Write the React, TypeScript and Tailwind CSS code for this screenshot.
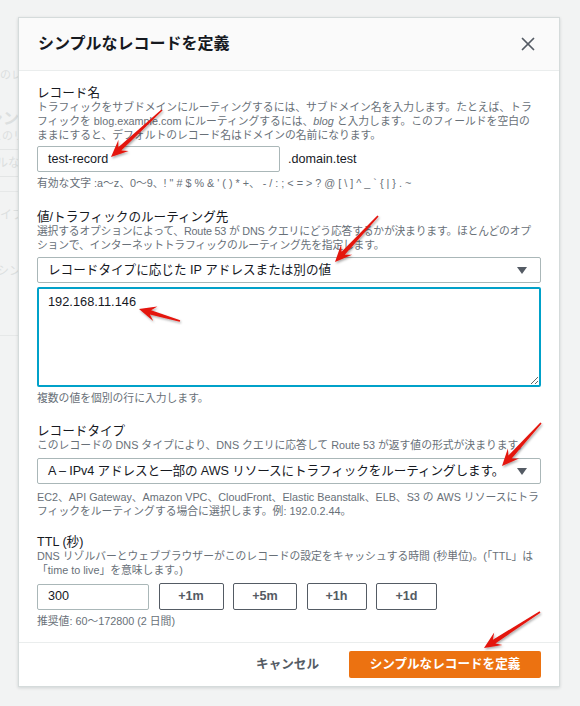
import { X } from 'lucide-react';

type Pt = [number, number];

// 注釈の赤い矢印 (from = 尾, to = 先端)
const arrows: { from: Pt; to: Pt }[] = [
  { from: [162, 110], to: [111, 157] },
  { from: [378, 216], to: [335, 262] },
  { from: [180, 321], to: [139, 309] },
  { from: [541, 423], to: [502, 466] },
  { from: [540, 612], to: [484, 648] },
];

const arrowPoints = (from: Pt, to: Pt) => {
  const [x1, y1] = from;
  const [x2, y2] = to;
  const len = Math.hypot(x2 - x1, y2 - y1);
  const ux = (x2 - x1) / len;
  const uy = (y2 - y1) / len;
  const nx = -uy;
  const ny = ux;
  const headLen = 17;
  const headW = 7.5;
  const neckW = 2.2;
  const tailW = 0.8;
  const notch = 5;
  const bx = x2 - ux * headLen;
  const by = y2 - uy * headLen;
  const kx = x2 - ux * (headLen - notch);
  const ky = y2 - uy * (headLen - notch);
  const pts: Pt[] = [
    [x1 + nx * tailW, y1 + ny * tailW],
    [kx + nx * neckW, ky + ny * neckW],
    [bx + nx * headW, by + ny * headW],
    [x2, y2],
    [bx - nx * headW, by - ny * headW],
    [kx - nx * neckW, ky - ny * neckW],
    [x1 - nx * tailW, y1 - ny * tailW],
  ];
  return pts.map(p => `${p[0].toFixed(1)},${p[1].toFixed(1)}`).join(' ');
};

const ttlButtons = [
  { label: '+1m', w: 'w-[65px]' },
  { label: '+5m', w: 'w-[64px]' },
  { label: '+1h', w: 'w-[60px]' },
  { label: '+1d', w: 'w-[61px]' },
];

function Caret() {
  return (
    <svg width="10" height="7" viewBox="0 0 10 7" className="shrink-0">
      <polygon points="0,0 10,0 5,7" fill="#545b64" />
    </svg>
  );
}

function Label({ children }: { children: React.ReactNode }) {
  return <div className="text-[12.6px] leading-[13px] text-[#16191f]">{children}</div>;
}

function Desc({ children, className = '' }: { children: React.ReactNode; className?: string }) {
  return <div className={`text-[10.8px] leading-[14px] text-[#687078] ${className}`}>{children}</div>;
}

export default function App() {
  const validChars =
    "有効な文字 :a〜z、0〜9、! \" # $ % & ' ( ) * +、 - / : ; < = > ? @ [ \\ ] ^ _ ` { | } . ~";

  return (
    <div className="relative h-[706px] w-[580px] overflow-hidden bg-[#f2f3f3] font-['Liberation_Sans','Noto_Sans_CJK_JP',sans-serif]">
      {/* 背後のページ (オーバーレイで薄く見える) */}
      <div className="flex flex-col text-[#dcdfdf]">
        <div className="mt-[68px] -ml-[11px] whitespace-nowrap text-[11px] leading-[14px]">このレコード</div>
        <div className="mt-[27px] -ml-[13px] whitespace-nowrap text-[16px] font-bold leading-[20px]">シンプルなレコード</div>
        <div className="-ml-[9px] whitespace-nowrap text-[11px] leading-[14px]">このリソース</div>
        <div className="mt-[6px] -ml-[4px] flex h-[28px] w-[60px] items-center border-y border-[#e3e5e5] whitespace-nowrap text-[12px]">ルなレコード</div>
        <div className="mt-[14px] h-px w-[30px] bg-[#e6e8e8]" />
        <div className="mt-[15px] -ml-[12px] whitespace-nowrap text-[12px] leading-[16px]">タイプ</div>
        <div className="mt-[40px] -ml-[3px] whitespace-nowrap text-[12px] leading-[16px]">シンプル</div>
        <div className="mt-[56px] h-px w-[30px] bg-[#e6e8e8]" />
      </div>

      {/* モーダル */}
      <div className="absolute left-[18px] top-[17px] w-[542px] border border-[#d5dbdb] bg-white shadow-[0_1px_3px_rgba(0,28,36,0.15)]">
        <div className="flex h-[53px] items-center justify-between border-b border-[#eaeded] bg-[#fafafa] pl-[19px] pr-[20px]">
          <h2 className="text-[16px] font-bold text-[#16191f]">シンプルなレコードを定義</h2>
          <X size={22} strokeWidth={1.9} color="#545b64" />
        </div>

        <div className="px-[18px] pb-[14px] pt-[16px]">
          {/* レコード名 */}
          <Label>レコード名</Label>
          <Desc>
            トラフィックをサブドメインにルーティングするには、サブドメイン名を入力します。たとえば、トラフィックを blog.example.com にルーティングするには、<i>blog</i> と入力します。このフィールドを空白の<span className="whitespace-nowrap">ままに</span>すると、デフォルトのレコード名はドメインの名前になります。
          </Desc>
          <div className="mt-[4px] flex items-center">
            <div className="flex h-[26px] w-[243px] items-center rounded-[2px] border border-[#aab7b8] px-[10px] text-[12.6px] text-[#16191f]">
              test-record
            </div>
            <span className="ml-[8px] text-[12.6px] text-[#16191f]">.domain.test</span>
          </div>
          <Desc className="mt-[4px]">{validChars}</Desc>

          {/* 値/トラフィックのルーティング先 */}
          <div className="mt-[21px]">
            <Label>値/トラフィックのルーティング先</Label>
            <Desc className="tracking-[-0.2px]">
              選択するオプションによって、Route 53 が DNS クエリにどう応答するかが決まります。ほとんどのオプションで、インターネットトラフィックのルーティング先を指定します。
            </Desc>
            <div className="mt-[5px] flex h-[26px] items-center justify-between rounded-[2px] border border-[#aab7b8] pl-[10px] pr-[13px] text-[12.6px] text-[#16191f]">
              <span>レコードタイプに応じた IP アドレスまたは別の値</span>
              <Caret />
            </div>
            <textarea
              readOnly
              defaultValue="192.168.11.146"
              className="mt-[4px] block h-[100px] w-full resize-y rounded-[2px] border-2 border-[#00a1c9] px-[9px] py-[5px] text-[12.8px] leading-[16px] text-[#16191f] outline-none"
            />
            <Desc className="mt-[4px]">複数の値を個別の行に入力します。</Desc>
          </div>

          {/* レコードタイプ */}
          <div className="mt-[20px]">
            <Label>レコードタイプ</Label>
            <Desc>このレコードの DNS タイプにより、DNS クエリに応答して Route 53 が返す値の形式が決まります。</Desc>
            <div className="mt-[6px] flex h-[26px] items-center justify-between rounded-[2px] border border-[#aab7b8] pl-[10px] pr-[13px] text-[12.6px] text-[#16191f]">
              <span className="tracking-[-0.1px]">A – IPv4 アドレスと一部の AWS リソースにトラフィックをルーティングします。</span>
              <Caret />
            </div>
            <Desc className="mt-[6px]">
              EC2、API Gateway、Amazon VPC、CloudFront、Elastic Beanstalk、ELB、S3 の AWS リソースにトラフィックをルーティングする場合に選択します。例: 192.0.2.44。
            </Desc>
          </div>

          {/* TTL */}
          <div className="mt-[18px]">
            <Label>TTL (秒)</Label>
            <Desc>
              DNS リゾルバーとウェブブラウザーがこのレコードの設定をキャッシュする時間 (秒単位)。(「TTL」は「time to live」を意味します。)
            </Desc>
            <div className="mt-[6px] flex items-center gap-[9.5px]">
              <div className="flex h-[26px] w-[112px] items-center rounded-[2px] border border-[#aab7b8] px-[10px] text-[12.6px] text-[#16191f]">
                300
              </div>
              {ttlButtons.map(b => (
                <button
                  key={b.label}
                  className={`flex h-[27px] items-center justify-center rounded-[2px] border border-[#545b64] text-[12.6px] font-bold text-[#545b64] ${b.w}`}
                >
                  {b.label}
                </button>
              ))}
            </div>
            <Desc className="mt-[4px]">推奨値: 60〜172800 (2 日間)</Desc>
          </div>
        </div>

        <div className="flex items-center justify-end gap-[10px] border-t border-[#eaeded] px-[18px] py-[8px]">
          <button className="h-[27px] px-[20px] text-[12.6px] font-bold text-[#545b64]">キャンセル</button>
          <button className="h-[27px] w-[192px] rounded-[2px] bg-[#ec7211] text-[12.6px] font-bold text-white">
            シンプルなレコードを定義
          </button>
        </div>
      </div>

      {/* 注釈 */}
      <svg className="pointer-events-none absolute inset-0" width="580" height="706">
        <defs>
          <filter id="shadow" x="-20%" y="-20%" width="140%" height="140%">
            <feDropShadow dx="1" dy="1.5" stdDeviation="1.2" floodColor="#000" floodOpacity="0.35" />
          </filter>
        </defs>
        {arrows.map((a, i) => (
          <polygon key={i} points={arrowPoints(a.from, a.to)} fill="#e4140f" filter="url(#shadow)" />
        ))}
      </svg>
    </div>
  );
}
